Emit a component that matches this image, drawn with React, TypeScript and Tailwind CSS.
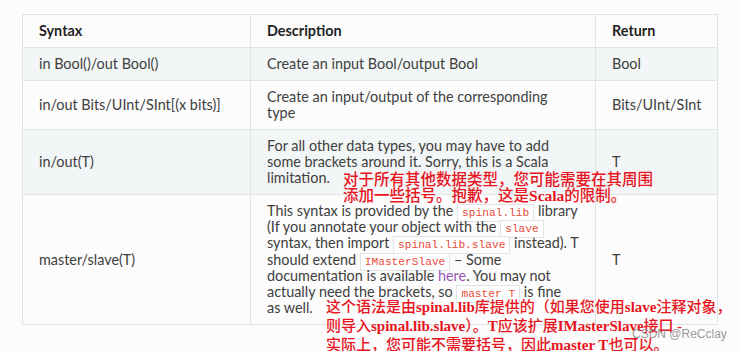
import React from "react"

function Code({ children }: { children: React.ReactNode }) {
  return (
    <span className="whitespace-nowrap border border-[#e1e4e5] bg-white px-[4px] py-[2px] font-['Liberation_Mono',monospace] text-[11.2px] leading-none text-[#e74c3c]">
      {children}
    </span>
  )
}

function B({ children }: { children: React.ReactNode }) {
  return <b className="font-['Liberation_Serif',serif] font-bold">{children}</b>
}

const th = "border border-[#e1e4e5] px-4 py-2 text-left align-middle font-bold text-[#1f1f1f]"
const td = "border border-[#e1e4e5] px-4 py-2 align-middle"
const note = "absolute whitespace-nowrap font-['Noto_Sans_CJK_SC',sans-serif] font-medium text-[#e8141e]"

export default function App() {
  return (
    <div className="relative h-[351px] w-full overflow-hidden bg-[#fcfcfc] pt-[14px] pl-[22px] font-['Lato',sans-serif] text-[14.4px] leading-4 text-[#404040]">
      <table className="w-[695px] table-fixed border-collapse">
        <colgroup>
          <col className="w-[228px]" />
          <col className="w-[345px]" />
          <col className="w-[122px]" />
        </colgroup>
        <thead>
          <tr>
            <th className={th}>Syntax</th>
            <th className={th}>Description</th>
            <th className={th}>Return</th>
          </tr>
        </thead>
        <tbody>
          <tr className="bg-[#f3f6f6]">
            <td className={td}>in Bool()/out Bool()</td>
            <td className={td}>Create an input Bool/output Bool</td>
            <td className={td}>Bool</td>
          </tr>
          <tr>
            <td className={td}>in/out Bits/UInt/SInt[(x bits)]</td>
            <td className={td}>Create an input/output of the corresponding type</td>
            <td className={td}>Bits/UInt/SInt</td>
          </tr>
          <tr className="bg-[#f3f6f6]">
            <td className={td}>in/out(T)</td>
            <td className={td}>
              For all other data types, you may have to add some brackets around it. Sorry, this is a Scala limitation.
            </td>
            <td className={td}>T</td>
          </tr>
          <tr>
            <td className={td}>master/slave(T)</td>
            <td className={td}>
              This syntax is provided by the <Code>spinal.lib</Code> library (If you annotate your object with the{" "}
              <Code>slave</Code> syntax, then import <Code>spinal.lib.slave</Code> instead). T should extend{" "}
              <Code>IMasterSlave</Code> – Some documentation is available <a className="text-[#9b59b6]">here</a>. You may
              not actually need the brackets, so <Code>master T</Code> is fine
              <br />
              as well.
            </td>
            <td className={td}>T</td>
          </tr>
        </tbody>
      </table>

      {/* pasted translation notes */}
      <div className={`${note} left-[343px] top-[170px] text-[15.5px] leading-[16.3px]`}>
        对于所有其他数据类型，您可能需要在其周围
        <br />
        添加一些括号。抱歉，这是<B>Scala</B>的限制。
      </div>
      <div className={`${note} left-[326px] top-[297px] text-[15px] leading-[18px]`}>
        这个语法是由<B>spinal.lib</B>库提供的（如果您使用<B>slave</B>注释对象，
        <br />
        则导入<B>spinal.lib.slave</B>）。<B>T</B>应该扩展<B>IMasterSlave</B>接口 <B>-</B>
        <br />
        实际上，您可能不需要括号，因此<B>master T</B>也可以。
      </div>

      <div className="absolute left-[632px] top-[326px] font-['Liberation_Sans',sans-serif] text-[12px] leading-4 text-[#8c8c8c]/90">
        CSDN @ReCclay
      </div>
    </div>
  )
}
